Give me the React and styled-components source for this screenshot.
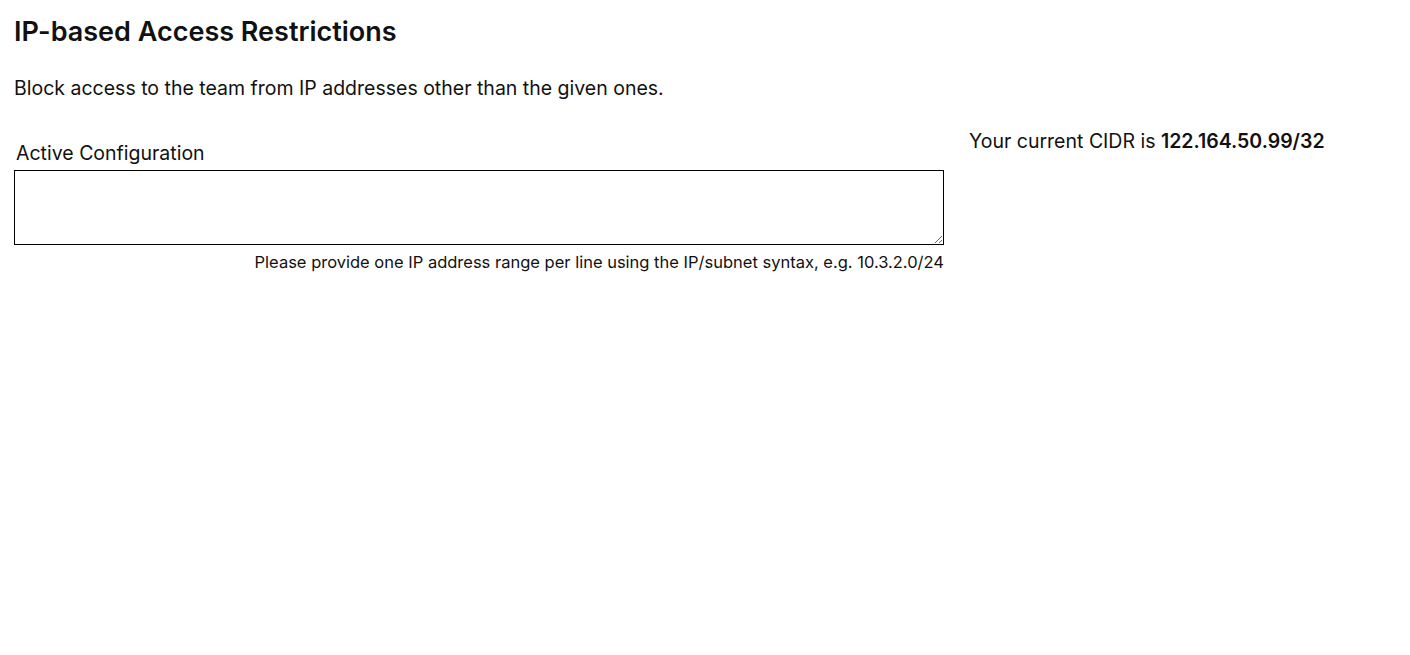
import React from "react";
import styled, { createGlobalStyle } from "styled-components";

const Global = createGlobalStyle`
  html, body { margin: 0; padding: 0; background: #fff; }
  body { font-family: Inter, "Noto Sans", sans-serif; color: #111; }
`;

const Page = styled.div`
  padding: 16px 14px 14px;
`;

const Title = styled.h2`
  margin: 0;
  font-size: 27px;
  font-weight: 600;
  line-height: 32px;
  color: #111;
`;

const Lead = styled.p`
  margin: 26px 0 0;
  font-size: 19.5px;
  line-height: 28px;
  color: #111;
`;

const Row = styled.div`
  display: flex;
  align-items: flex-start;
  gap: 25px;
  margin-top: 25px;
`;

const Field = styled.div`
  width: 930px;
  display: flex;
  flex-direction: column;
  padding-top: 12px;
`;

const Label = styled.label`
  font-size: 19.5px;
  line-height: 28px;
  padding-left: 2px;
  margin-bottom: 3px;
`;

const Area = styled.textarea`
  box-sizing: border-box;
  display: block;
  width: 930px;
  height: 75px;
  border: 1px solid #000;
  border-radius: 0;
  margin: 0;
  padding: 4px 6px;
  font-family: inherit;
  font-size: 16px;
  outline: none;
`;

const Hint = styled.div`
  text-align: right;
  font-size: 16.5px;
  line-height: 24px;
  margin-top: 5px;
`;

const Side = styled.div`
  font-size: 19.5px;
  line-height: 28px;
  b { font-weight: 600; }
`;

export default function App() {
  return (
    <>
      <Global />
      <Page>
        <Title>IP-based Access Restrictions</Title>
        <Lead>Block access to the team from IP addresses other than the given ones.</Lead>
        <Row>
          <Field>
            <Label htmlFor="cfg">Active Configuration</Label>
            <Area id="cfg" />
            <Hint>Please provide one IP address range per line using the IP/subnet syntax, e.g. 10.3.2.0/24</Hint>
          </Field>
          <Side>
            Your current CIDR is <b>122.164.50.99/32</b>
          </Side>
        </Row>
      </Page>
    </>
  );
}
